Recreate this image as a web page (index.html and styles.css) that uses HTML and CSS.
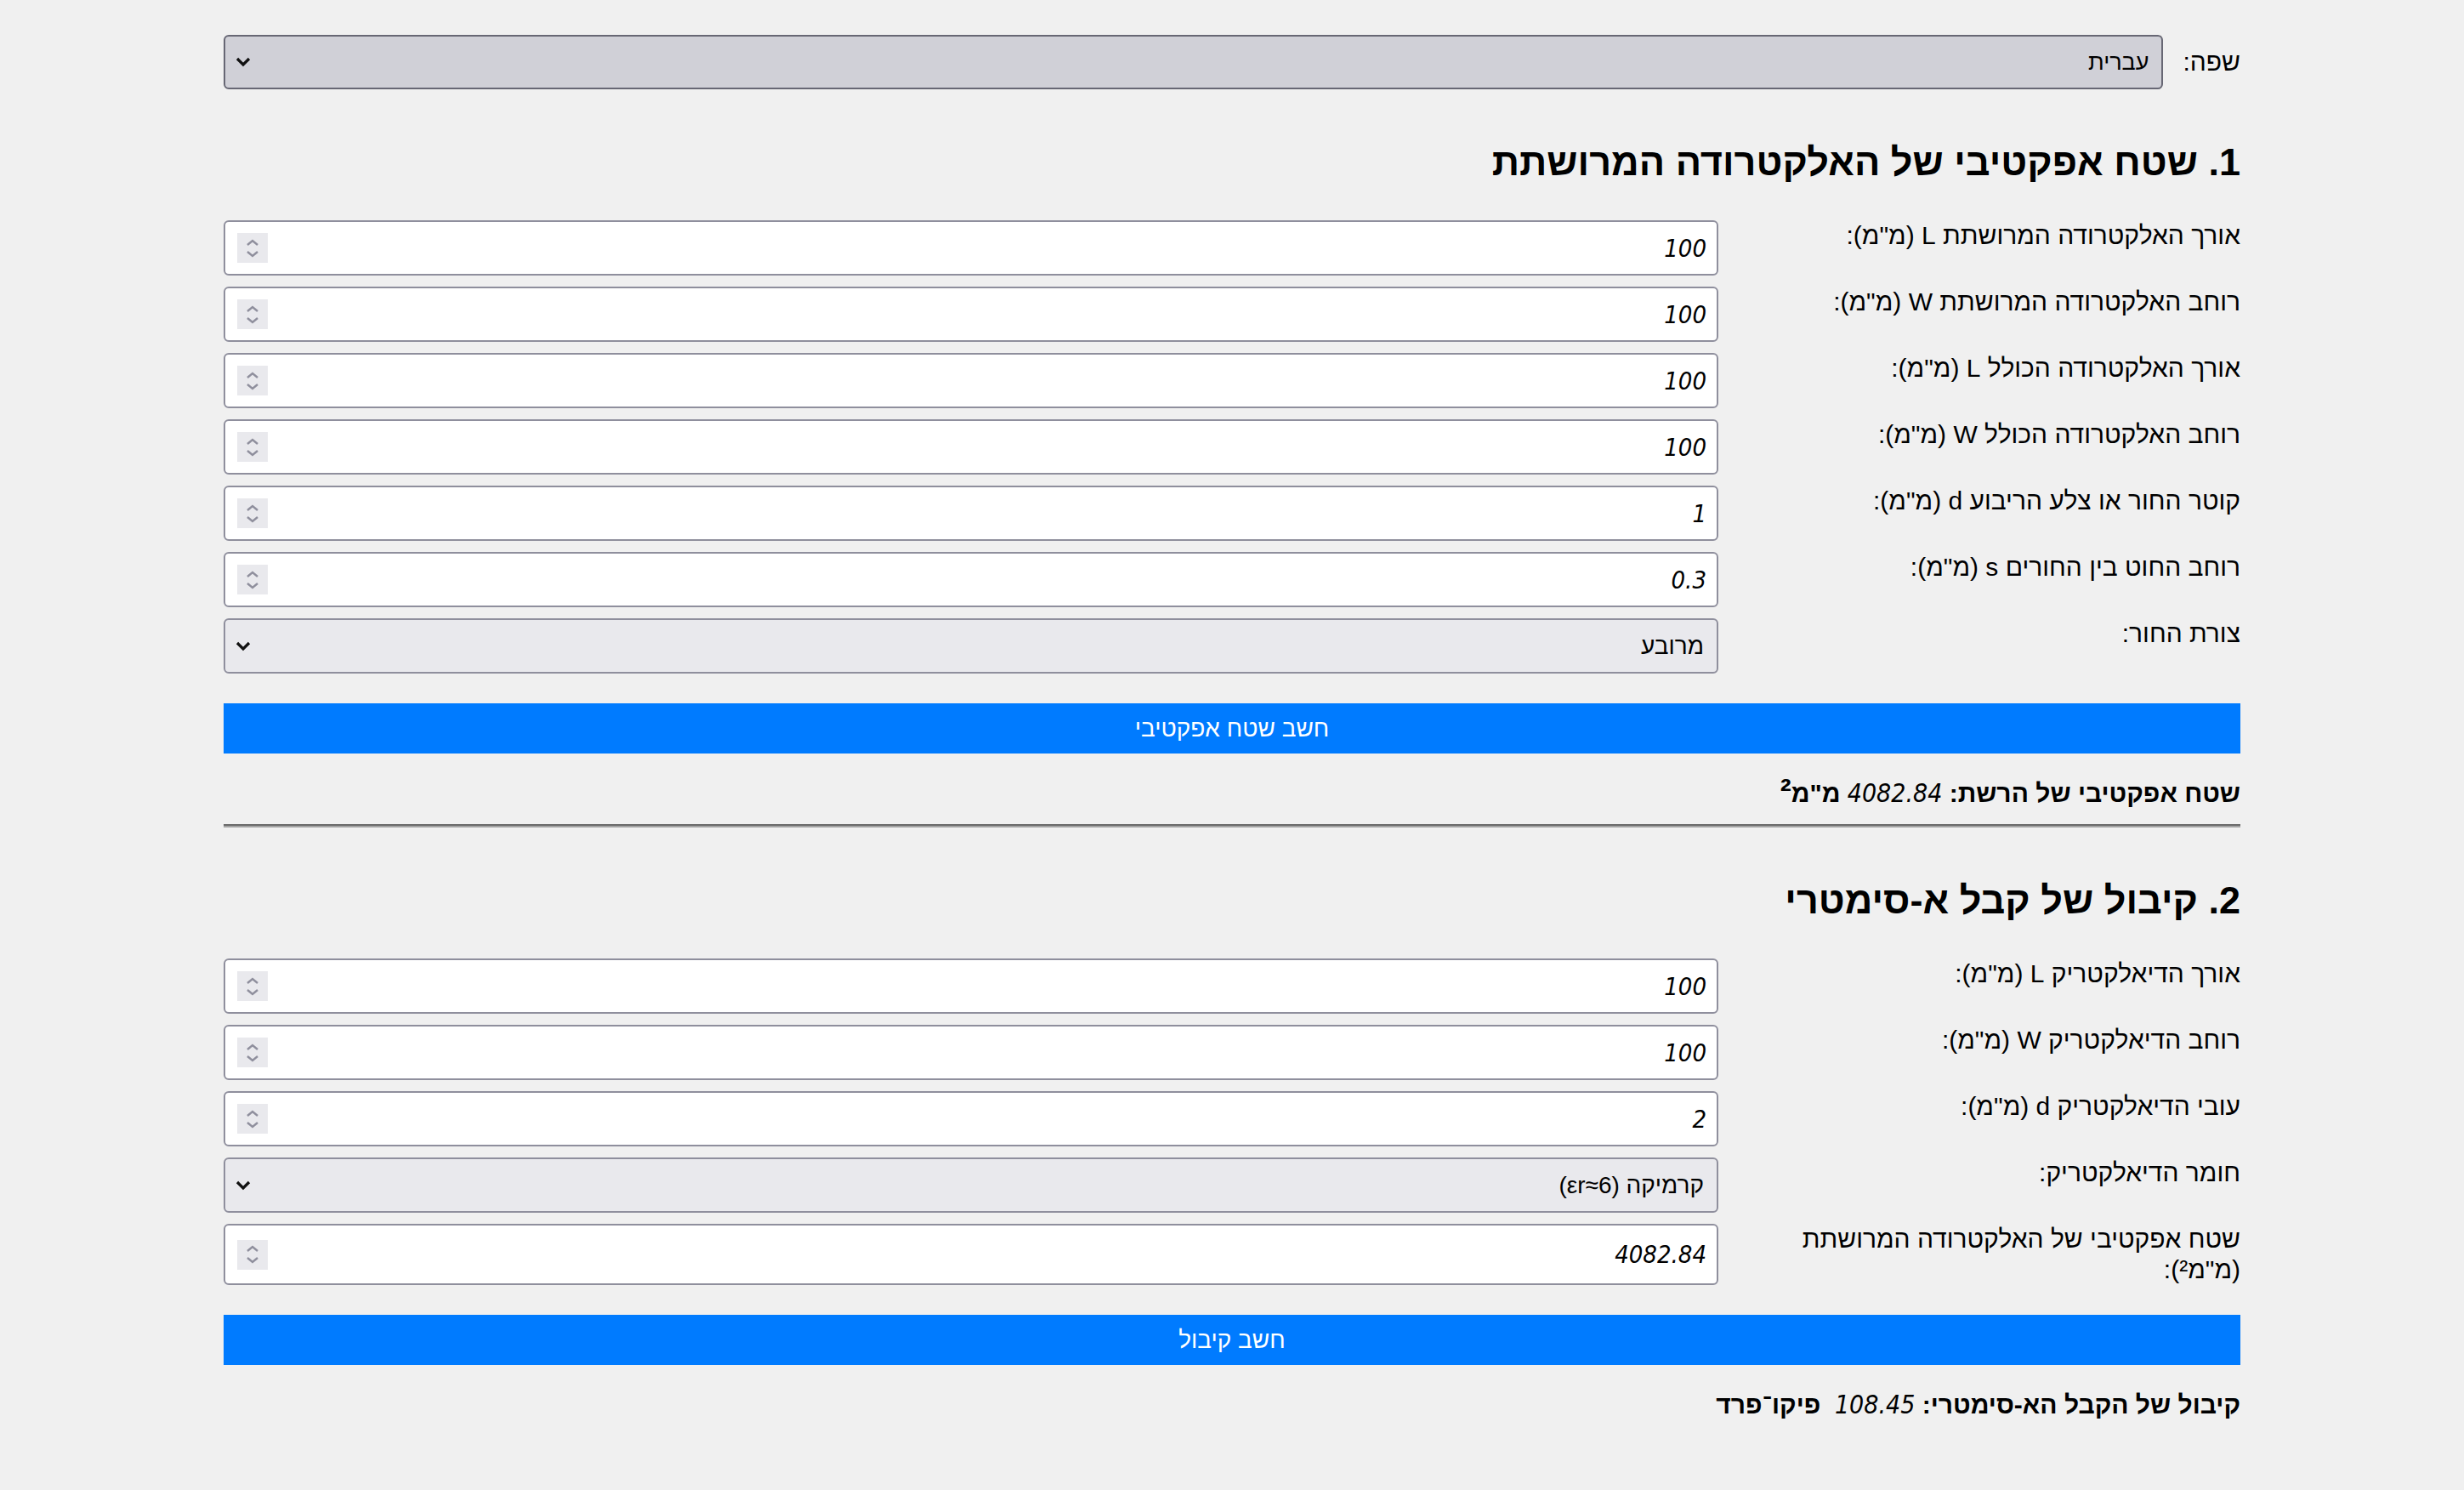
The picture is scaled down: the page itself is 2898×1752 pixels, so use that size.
FILE: index.html
```html
<!DOCTYPE html>
<html lang="he" dir="rtl">
<head>
<meta charset="utf-8">
<title>מחשבון קבל</title>
<link rel="stylesheet" href="styles.css">
</head>
<body>
<div class="container">
  <div class="lang-row">
    <label class="lang-label">שפה:</label>
    <div class="sel-wrap">
      <select class="sel sel-hover"><option>עברית</option></select>
      <svg class="chev" width="18" height="12" viewBox="0 0 18 12"><path d="M2 2 L9 9 L16 2" fill="none" stroke="#111" stroke-width="3.2"/></svg>
    </div>
  </div>

  <section class="section">
    <h2>1. שטח אפקטיבי של האלקטרודה המרושתת</h2>

    <div class="row">
      <label class="lbl">אורך האלקטרודה המרושתת L (מ"מ):</label>
      <div class="num-field">
        <span class="spin"><svg width="18" height="24" viewBox="0 0 18 24"><path d="M3 8 L9 3 L15 8 M3 16 L9 21 L15 16" fill="none" stroke="#8f8f9d" stroke-width="2.4"/></svg></span>
        <input class="num" type="text" value="100">
      </div>
    </div>
    <div class="row">
      <label class="lbl">רוחב האלקטרודה המרושתת W (מ"מ):</label>
      <div class="num-field">
        <span class="spin"><svg width="18" height="24" viewBox="0 0 18 24"><path d="M3 8 L9 3 L15 8 M3 16 L9 21 L15 16" fill="none" stroke="#8f8f9d" stroke-width="2.4"/></svg></span>
        <input class="num" type="text" value="100">
      </div>
    </div>
    <div class="row">
      <label class="lbl">אורך האלקטרודה הכולל L (מ"מ):</label>
      <div class="num-field">
        <span class="spin"><svg width="18" height="24" viewBox="0 0 18 24"><path d="M3 8 L9 3 L15 8 M3 16 L9 21 L15 16" fill="none" stroke="#8f8f9d" stroke-width="2.4"/></svg></span>
        <input class="num" type="text" value="100">
      </div>
    </div>
    <div class="row">
      <label class="lbl">רוחב האלקטרודה הכולל W (מ"מ):</label>
      <div class="num-field">
        <span class="spin"><svg width="18" height="24" viewBox="0 0 18 24"><path d="M3 8 L9 3 L15 8 M3 16 L9 21 L15 16" fill="none" stroke="#8f8f9d" stroke-width="2.4"/></svg></span>
        <input class="num" type="text" value="100">
      </div>
    </div>
    <div class="row">
      <label class="lbl">קוטר החור או צלע הריבוע d (מ"מ):</label>
      <div class="num-field">
        <span class="spin"><svg width="18" height="24" viewBox="0 0 18 24"><path d="M3 8 L9 3 L15 8 M3 16 L9 21 L15 16" fill="none" stroke="#8f8f9d" stroke-width="2.4"/></svg></span>
        <input class="num" type="text" value="1">
      </div>
    </div>
    <div class="row">
      <label class="lbl">רוחב החוט בין החורים s (מ"מ):</label>
      <div class="num-field">
        <span class="spin"><svg width="18" height="24" viewBox="0 0 18 24"><path d="M3 8 L9 3 L15 8 M3 16 L9 21 L15 16" fill="none" stroke="#8f8f9d" stroke-width="2.4"/></svg></span>
        <input class="num" type="text" value="0.3">
      </div>
    </div>
    <div class="row">
      <label class="lbl">צורת החור:</label>
      <div class="sel-wrap">
        <select class="sel"><option>מרובע</option></select>
        <svg class="chev" width="18" height="12" viewBox="0 0 18 12"><path d="M2 2 L9 9 L16 2" fill="none" stroke="#111" stroke-width="3.2"/></svg>
      </div>
    </div>

    <button class="calc-btn" type="button">חשב שטח אפקטיבי</button>
    <p class="result">שטח אפקטיבי של הרשת: <span class="val">4082.84</span> מ"מ<span class="sq">²</span></p>
  </section>

  <hr class="divider">

  <section class="section">
    <h2>2. קיבול של קבל א-סימטרי</h2>

    <div class="row">
      <label class="lbl">אורך הדיאלקטריק L (מ"מ):</label>
      <div class="num-field">
        <span class="spin"><svg width="18" height="24" viewBox="0 0 18 24"><path d="M3 8 L9 3 L15 8 M3 16 L9 21 L15 16" fill="none" stroke="#8f8f9d" stroke-width="2.4"/></svg></span>
        <input class="num" type="text" value="100">
      </div>
    </div>
    <div class="row">
      <label class="lbl">רוחב הדיאלקטריק W (מ"מ):</label>
      <div class="num-field">
        <span class="spin"><svg width="18" height="24" viewBox="0 0 18 24"><path d="M3 8 L9 3 L15 8 M3 16 L9 21 L15 16" fill="none" stroke="#8f8f9d" stroke-width="2.4"/></svg></span>
        <input class="num" type="text" value="100">
      </div>
    </div>
    <div class="row">
      <label class="lbl">עובי הדיאלקטריק d (מ"מ):</label>
      <div class="num-field">
        <span class="spin"><svg width="18" height="24" viewBox="0 0 18 24"><path d="M3 8 L9 3 L15 8 M3 16 L9 21 L15 16" fill="none" stroke="#8f8f9d" stroke-width="2.4"/></svg></span>
        <input class="num" type="text" value="2">
      </div>
    </div>
    <div class="row">
      <label class="lbl">חומר הדיאלקטריק:</label>
      <div class="sel-wrap">
        <select class="sel"><option>קרמיקה (εr≈6)</option></select>
        <svg class="chev" width="18" height="12" viewBox="0 0 18 12"><path d="M2 2 L9 9 L16 2" fill="none" stroke="#111" stroke-width="3.2"/></svg>
      </div>
    </div>
    <div class="row">
      <label class="lbl">שטח אפקטיבי של האלקטרודה המרושתת (מ"מ²):</label>
      <div class="num-field">
        <span class="spin"><svg width="18" height="24" viewBox="0 0 18 24"><path d="M3 8 L9 3 L15 8 M3 16 L9 21 L15 16" fill="none" stroke="#8f8f9d" stroke-width="2.4"/></svg></span>
        <input class="num" type="text" value="4082.84">
      </div>
    </div>

    <button class="calc-btn" type="button">חשב קיבול</button>
    <p class="result">קיבול של הקבל הא-סימטרי: <span class="val">108.45</span>&nbsp; פיקו־פרד</p>
  </section>
</div>
</body>
</html>
```
FILE: styles.css
```css
* { box-sizing: border-box; }

html, body {
  margin: 0;
  padding: 0;
  background: #f0f0f0;
}

body {
  font-family: "Liberation Sans", "DejaVu Sans", sans-serif;
  font-size: 30px;
  line-height: 36px;
  color: #000;
}

.container {
  width: 2372px;
  margin: 0 auto;
  padding-top: 41px;
}

.lang-row {
  display: flex;
  align-items: center;
  gap: 23px;
  height: 64px;
  margin-bottom: 4px;
}

.lang-label {
  flex: none;
}

.sel-wrap {
  position: relative;
  flex: 1;
  display: flex;
}

.sel {
  -webkit-appearance: none;
  appearance: none;
  width: 100%;
  height: 65px;
  border: 2px solid #8f8f9d;
  border-radius: 6px;
  background: #e9e9ed;
  font-family: inherit;
  font-size: 28px;
  color: #000;
  padding: 0 15px;
  direction: rtl;
}

.lang-row .sel {
  height: 64px;
  font-size: 27px;
}

.sel-hover {
  background: #d0d0d7;
  border-color: #676774;
}

.chev {
  position: absolute;
  left: 14px;
  top: 50%;
  margin-top: -6px;
  pointer-events: none;
}

.section h2 {
  font-size: 45px;
  line-height: 56px;
  font-weight: bold;
  margin: 58px 0 40px;
}

.row {
  display: flex;
  gap: 20px;
  margin-bottom: 13px;
  min-height: 65px;
}

.lbl {
  flex: none;
  width: 594px;
  line-height: 36px;
}

.sq {
  font-size: 1.3em;
  line-height: 0;
}

.num-field {
  flex: 1;
  display: flex;
  direction: ltr;
  align-items: center;
  background: #fff;
  border: 2px solid #8f8f9d;
  border-radius: 6px;
  padding: 0 12px 0 14px;
}

.spin {
  flex: none;
  width: 36px;
  height: 35px;
  background: #e9e9ed;
  display: flex;
  align-items: center;
  justify-content: center;
}

.num {
  flex: 1;
  border: none;
  outline: none;
  background: transparent;
  font-family: "Liberation Sans Narrow", "DejaVu Sans Condensed", "Liberation Sans", sans-serif;
  font-size: 29px;
  font-style: italic;
  text-align: right;
  color: #000;
  padding: 0;
  height: 100%;
}

.calc-btn {
  display: block;
  width: 100%;
  margin-top: 35px;
  height: 59px;
  border: none;
  border-radius: 0;
  background: #007bff;
  color: #fff;
  font-family: inherit;
  font-size: 28px;
  padding: 0;
}

.result {
  margin: 28px 0 0;
  font-weight: bold;
  line-height: 37px;
}

.val {
  font-weight: normal;
  font-style: italic;
  font-family: "Liberation Sans Narrow", "DejaVu Sans Condensed", "Liberation Sans", sans-serif;
}

.divider {
  margin: 18px 0 0;
  border: none;
  border-top: 2px solid #6b6b6b;
  border-bottom: 2px solid #a3a3a3;
  height: 0;
}
```
